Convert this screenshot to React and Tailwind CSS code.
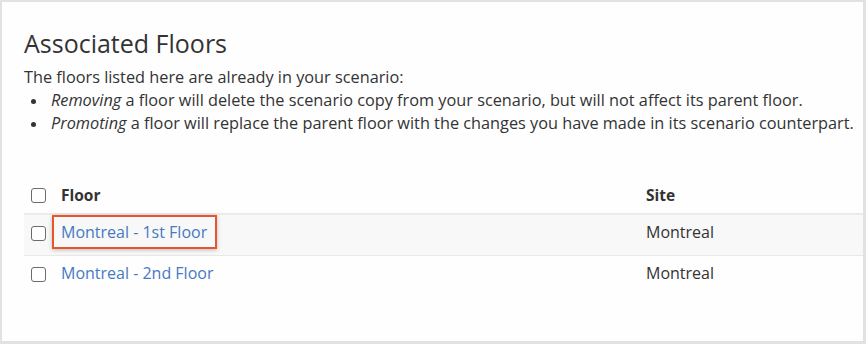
const FONT = { fontFamily: '"Open Sans", "Noto Sans", Arial, sans-serif' }

function Box() {
  return <span className="block w-[15px] h-[15px] rounded-[3px] border border-[#6b6b6b] bg-white" />
}

function Bullet({ em, children }) {
  return (
    <div className="flex items-start">
      <span className="w-[27px] h-[23px] flex items-center shrink-0">
        <span className="ml-[7px] mt-[1px] w-[5px] h-[5px] rounded-full bg-[#333]" />
      </span>
      <span><em>{em}</em> {children}</span>
    </div>
  )
}

const rows = [
  { floor: 'Montreal - 1st Floor', site: 'Montreal', marked: true },
  { floor: 'Montreal - 2nd Floor', site: 'Montreal' },
]

export default function App() {
  return (
    <div className="w-[866px] h-[344px] bg-[#e3e1e3] pt-[2px] pl-[2px] pr-[3px] pb-[3px]" style={FONT}>
      <div className="h-full bg-[#fefefe] pl-[22px] pt-[28px] text-[#333]">
        <h2 className="text-[25px] leading-[26px] font-normal">Associated Floors</h2>
        <div className="mt-[10px] text-[16.3px] leading-[23px]">
          <div>The floors listed here are already in your scenario:</div>
          <Bullet em="Removing">a floor will delete the scenario copy from your scenario, but will not affect its parent floor.</Bullet>
          <Bullet em="Promoting">a floor will replace the parent floor with the changes you have made in its scenario counterpart.</Bullet>
        </div>

        <div className="mt-[41px] text-[16px] leading-[23px]">
          <div className="flex h-[39px] pt-[8px] border-b-2 border-[#ebebeb] font-bold text-[15.5px]">
            <div className="w-[37px] pl-[7px] pt-[4px]"><Box /></div>
            <div className="w-[585px]">Floor</div>
            <div className="flex-1">Site</div>
          </div>
          {rows.map((r, i) => (
            <div key={r.floor} className={`flex h-[41px] pt-[6px] ${i === 0 ? 'bg-[#f8f8f8] border-b border-[#e8e8e8]' : ''}`}>
              <div className="w-[37px] pl-[7px] pt-[5px]"><Box /></div>
              <div className="w-[585px]">
                <span className="relative inline-block text-[#4779c4]">
                  {r.floor}
                  {r.marked && (
                    <span className="absolute left-[-9px] right-[-10px] top-[-6px] bottom-[-5px] border-2 border-[#e8552d] shadow-[0_1px_4px_rgba(0,0,0,0.25)]" />
                  )}
                </span>
              </div>
              <div className="flex-1">{r.site}</div>
            </div>
          ))}
        </div>
      </div>
    </div>
  )
}
